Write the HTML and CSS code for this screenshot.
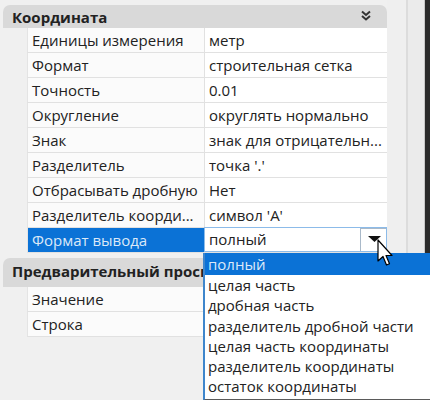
FILE: index.html
```html
<!DOCTYPE html>
<html>
<head>
<meta charset="utf-8">
<link rel="stylesheet" href="styles.css">
</head>
<body>
<div class="screen">
  <div class="grid">
    <div class="group">
      <div class="ghead">
        <span>Координата</span>
        <svg class="chev" width="10" height="11" viewBox="0 0 10 11"><path d="M1 1.5 L5 5 L9 1.5 M1 6 L5 9.5 L9 6" fill="none" stroke="#333" stroke-width="2"/></svg>
      </div>
      <div class="rows">
        <div class="row"><div class="name">Единицы измерения</div><div class="val">метр</div></div>
        <div class="row"><div class="name">Формат</div><div class="val">строительная сетка</div></div>
        <div class="row"><div class="name">Точность</div><div class="val">0.01</div></div>
        <div class="row"><div class="name">Округление</div><div class="val">округлять нормально</div></div>
        <div class="row"><div class="name">Знак</div><div class="val">знак для отрицательн...</div></div>
        <div class="row"><div class="name">Разделитель</div><div class="val">точка '.'</div></div>
        <div class="row"><div class="name">Отбрасывать дробную</div><div class="val">Нет</div></div>
        <div class="row"><div class="name">Разделитель коорди...</div><div class="val">символ 'A'</div></div>
        <div class="row sel"><div class="name">Формат вывода</div><div class="val combo"><span>полный</span><span class="btn"><svg width="13" height="7" viewBox="0 0 13 7"><path d="M0 0 H13 L6.5 6 Z" fill="#111"/></svg></span></div></div>
      </div>
    </div>
    <div class="group g2">
      <div class="ghead h2"><span class="clip">Предварительный просмотр</span></div>
      <div class="rows">
        <div class="row"><div class="name">Значение</div><div class="val"></div></div>
        <div class="row"><div class="name">Строка</div><div class="val"></div></div>
      </div>
    </div>
  </div>
  <div class="side"><div class="s1"></div><div class="s2"></div><div class="s3"></div></div>

  <ul class="list">
    <li class="hi">полный</li>
    <li>целая часть</li>
    <li>дробная часть</li>
    <li>разделитель дробной части</li>
    <li>целая часть координаты</li>
    <li>разделитель координаты</li>
    <li>остаток координаты</li>
  </ul>

  <svg class="cursor" width="16" height="28" viewBox="0 0 16 28"><path d="M1 1 L1 22 L6 17.5 L9.5 26 L12.5 24.8 L9 16.5 L15 16.5 Z" fill="#fff" stroke="#000" stroke-width="1.2" stroke-linejoin="round"/></svg>
</div>
</body>
</html>
```
FILE: styles.css
```css
html, body {
  margin: 0;
  padding: 0;
}
body {
  background: #f0f0f0;
  font-family: "Open Sans", "Noto Sans", sans-serif;
  font-size: 15px;
  color: #222;
}
.screen {
  position: relative;
  width: 430px;
  height: 400px;
  overflow: hidden;
  display: flex;
}
.grid {
  width: 384px;
  padding: 5px 0 0 3px;
}
.ghead {
  height: 23px;
  background: #d9d9d9;
  border-radius: 7px 7px 0 0;
  display: flex;
  align-items: center;
  justify-content: space-between;
  padding: 0 16px 0 9px;
  font-weight: 700;
  line-height: 18px;
  box-sizing: border-box;
}
.ghead.h2 {
  height: 29px;
  padding-bottom: 3px;
  white-space: nowrap;
  overflow: hidden;
}
.clip {
  display: block;
  width: 191px;
  overflow: hidden;
  white-space: nowrap;
}
.chev {
  display: block;
  margin-top: -3px;
}
.g2 {
  margin-top: 5px;
}
.rows {
  margin-left: 24px;
}
.row {
  display: grid;
  grid-template-columns: 177px 1fr;
  height: 25px;
  box-sizing: border-box;
  border-bottom: 1px solid #e1e1e1;
  border-left: 1px solid #e4e4e4;
  line-height: 24px;
  white-space: nowrap;
}
.name {
  background: #fbfbfb;
  padding-left: 4px;
  border-right: 1px solid #e1e1e1;
  overflow: hidden;
}
.val {
  background: #fff;
  padding-left: 4px;
  overflow: hidden;
}
.row.sel .name {
  background: #0b72d6;
  color: #dce9f8;
}
.combo {
  display: flex;
  justify-content: space-between;
  border: 1px solid #8cbbe9;
  margin: -1px 0 -1px -1px;
  height: 25px;
  box-sizing: border-box;
  line-height: 22px;
  padding-left: 4px;
}
.btn {
  width: 26px;
  border: 1px solid #a9b9c9;
  border-right: none;
  border-bottom: none;
  box-sizing: border-box;
  display: flex;
  align-items: center;
  justify-content: center;
  padding-bottom: 2px;
}
.btn svg {
  display: block;
  margin-left: 1px;
}
.side {
  display: flex;
  flex: 1;
}
.s1 {
  width: 19px;
  background: #efefef;
  border-right: 2px solid #dcdcdc;
}
.s2 {
  width: 16px;
  background: #ebebeb;
  border-right: 1px solid #c8c8c8;
}
.s3 {
  flex: 1;
  background: #2b2b2b;
}
.list {
  position: absolute;
  left: 203px;
  top: 253px;
  width: 240px;
  margin: 0;
  padding: 0 0 2px 0;
  list-style: none;
  background: #fff;
  border-left: 2px solid #3f86cc;
  border-bottom: 2px solid #5a5a5a;
  box-sizing: border-box;
}
.list li {
  height: 20.3px;
  line-height: 20px;
  padding-left: 3px;
  white-space: nowrap;
}
.list li.hi {
  background: #0b72d6;
  color: #dce9f8;
  height: 22px;
  line-height: 22px;
}
.cursor {
  position: absolute;
  left: 377px;
  top: 239px;
}
```
